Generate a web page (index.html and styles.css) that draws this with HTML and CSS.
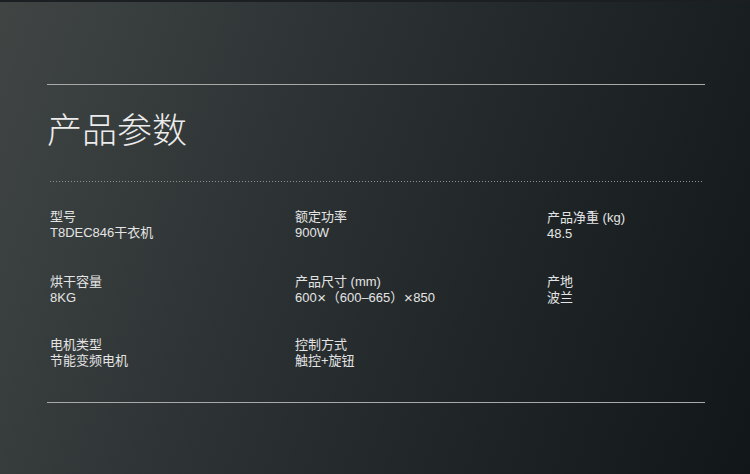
FILE: index.html
```html
<!DOCTYPE html>
<html lang="zh-CN">
<head>
<meta charset="utf-8">
<title>产品参数</title>
<link rel="stylesheet" href="styles.css">
</head>
<body>
<div class="page">
  <div class="strip"></div>
  <section class="specs">
    <hr class="rule">
    <h1 class="title">产品参数</h1>
    <div class="dots"></div>
    <div class="grid">
      <div class="item"><div class="label">型号</div><div class="value">T8DEC846干衣机</div></div>
      <div class="item"><div class="label">额定功率</div><div class="value">900W</div></div>
      <div class="item shift"><div class="label">产品净重 (kg)</div><div class="value">48.5</div></div>
      <div class="item"><div class="label">烘干容量</div><div class="value">8KG</div></div>
      <div class="item"><div class="label">产品尺寸 (mm)</div><div class="value">600<span class="times">×</span>（600–665）<span class="times">×</span>850</div></div>
      <div class="item"><div class="label">产地</div><div class="value">波兰</div></div>
      <div class="item"><div class="label">电机类型</div><div class="value">节能变频电机</div></div>
      <div class="item"><div class="label">控制方式</div><div class="value">触控+旋钮</div></div>
      <div class="item"></div>
    </div>
    <hr class="rule bottom">
  </section>
</div>
</body>
</html>
```
FILE: styles.css
```css
html, body {
  margin: 0;
  padding: 0;
}
body {
  width: 750px;
  height: 474px;
  overflow: hidden;
  font-family: "Noto Sans CJK SC", "Noto Sans", sans-serif;
  color: #e4e4e4;
}
.page {
  width: 750px;
  height: 474px;
  background: linear-gradient(110deg, #404544 0%, #2e3435 35%, #202628 65%, #111719 100%);
}
.strip {
  height: 2px;
  background: #1b1f22;
}
.specs {
  padding: 82px 45px 0 47px;
}
.rule {
  margin: 0;
  border: 0;
  height: 1px;
  background: #a9aaa8;
}
.title {
  margin: 25px 0 0 0;
  font-size: 35px;
  line-height: 35px;
  font-weight: 300;
  color: #ececec;
  letter-spacing: 0;
}
.dots {
  margin: 36px 3px 0 3px;
  height: 1px;
  background-image: repeating-linear-gradient(90deg, #8f9291 0 1px, transparent 1px 3px);
}
.grid {
  margin-top: 27px;
  padding-left: 3px;
  display: grid;
  grid-template-columns: 245px 252px 1fr;
  grid-template-rows: 65px 63px 32px;
  font-family: "Liberation Sans", "Noto Sans CJK SC", sans-serif;
}
.item {
  font-size: 13px;
  line-height: 16px;
}
.item.shift {
  padding-top: 1px;
}
.label, .value {
  white-space: nowrap;
}
.times {
  display: inline-block;
  width: 10px;
  text-align: center;
  font-size: 15px;
  line-height: 16px;
  vertical-align: top;
}
.bottom {
  margin-top: 33px;
}
```
